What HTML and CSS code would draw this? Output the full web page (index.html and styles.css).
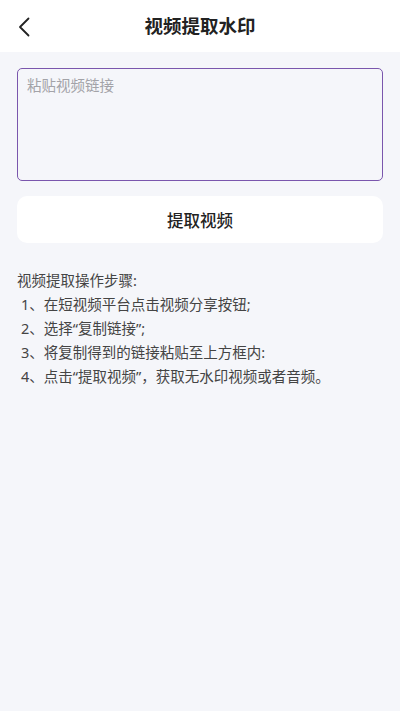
FILE: index.html
```html
<!DOCTYPE html>
<html lang="zh-CN">
<head>
<meta charset="utf-8">
<meta name="viewport" content="width=device-width, initial-scale=1">
<title>视频提取水印</title>
<link rel="stylesheet" href="styles.css">
</head>
<body>
<div class="app">
  <header class="topbar">
    <button class="back" aria-label="返回">
      <svg width="14" height="20" viewBox="0 0 14 20"><path d="M11.5 1.5 L3 10 L11.5 18.5" fill="none" stroke="#222" stroke-width="1.8" stroke-linecap="round" stroke-linejoin="round"/></svg>
    </button>
    <h1 class="title">视频提取水印</h1>
  </header>
  <main class="content">
    <textarea class="link-input" placeholder="粘贴视频链接"></textarea>
    <button class="extract">提取视频</button>
    <div class="steps">
      <p class="steps-title">视频提取操作步骤:</p>
      <p class="step">1、在短视频平台点击视频分享按钮;</p>
      <p class="step">2、选择“复制链接”;</p>
      <p class="step">3、将复制得到的链接粘贴至上方框内:</p>
      <p class="step">4、点击“提取视频”，获取无水印视频或者音频。</p>
    </div>
  </main>
</div>
</body>
</html>
```
FILE: styles.css
```css
* { box-sizing: border-box; }
html, body { margin: 0; padding: 0; height: 100%; }
body {
  font-family: "Noto Sans", "Noto Sans CJK SC", sans-serif;
  background: #f5f6fa;
  color: #222;
}
.app { min-height: 100%; display: flex; flex-direction: column; }
.topbar {
  height: 52px;
  background: #fff;
  display: flex;
  align-items: center;
  justify-content: center;
  position: relative;
}
.back {
  position: absolute;
  left: 14px;
  top: 16px;
  width: 20px;
  height: 22px;
  padding: 0;
  border: none;
  background: none;
  display: flex;
  align-items: center;
  justify-content: center;
}
.title {
  margin: 0;
  font-size: 18.5px;
  font-weight: 700;
  color: #222;
  line-height: 24px;
}
.content {
  padding: 16px 17px 0;
  display: flex;
  flex-direction: column;
}
.link-input {
  display: block;
  width: 100%;
  height: 113px;
  border: 1.5px solid #7a56ad;
  border-radius: 5px;
  background: #f5f6fa;
  padding: 6px 9px;
  font-family: inherit;
  font-size: 14.5px;
  line-height: 20px;
  resize: none;
  outline: none;
  color: #333;
}
.link-input::placeholder { color: #a3a3a8; }
.extract {
  margin-top: 15px;
  height: 47px;
  border: none;
  border-radius: 10px;
  background: #fff;
  font-family: inherit;
  font-size: 16.5px;
  color: #222;
  font-weight: 500;
}
.steps {
  margin-top: 25px;
  color: #444;
  font-size: 14.5px;
  line-height: 24px;
}
.steps p { margin: 0; }
.step { padding-left: 4px; }
```
